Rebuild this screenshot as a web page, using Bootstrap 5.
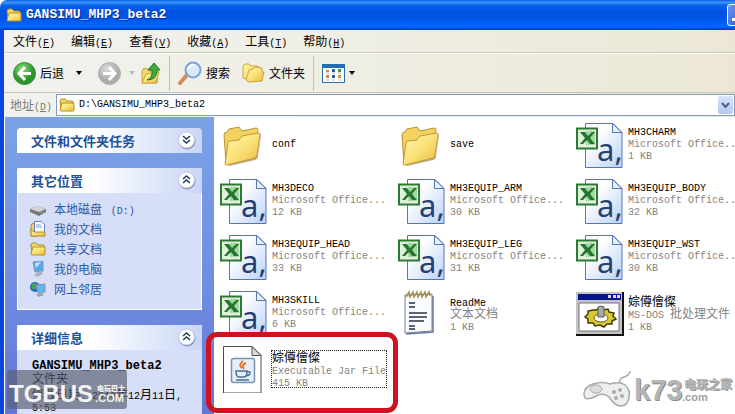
<!DOCTYPE html>
<html lang="zh-CN">
<head>
<meta charset="utf-8">
<meta name="viewport" content="width=device-width, initial-scale=1">
<title>GANSIMU_MHP3_beta2</title>
<link href="https://cdn.jsdelivr.net/npm/bootstrap@5.3.0/dist/css/bootstrap.min.css" rel="stylesheet">
<style>
body{font:12px/12px "Noto Sans CJK SC",sans-serif;color:#000;background:#fff}
button,input{font:inherit;color:inherit;background:none;border:0;padding:0}
a{color:inherit;text-decoration:none}
svg{display:block;flex:none}
.en{font-family:"Liberation Mono",monospace;font-size:10px;line-height:0}
.file>.en,input.en{line-height:12px}
.explorer{min-height:100vh;overflow:hidden}
.titlebar{height:30px;padding-left:6px;gap:4px;color:#fff;background:linear-gradient(#0a5be0,#3c96fc 8%,#0a62ee 18%,#0053e1 35%,#0054e6 60%,#0066fd 85%,#0060f8 92%,#0039b0);border-top-left-radius:7px}
.titlebar h1{font:bold 13px/18px "Liberation Mono",monospace;margin:0;text-shadow:1px 1px #0b2d8c}
.winbtn{width:22px;height:22px;margin-right:-14px;border:1px solid #fff;border-radius:3px;background:linear-gradient(135deg,#6f97f2,#2450d8)}
.frame{border-left:4px solid #0a45e0}
.bars{background:linear-gradient(90deg,#f1f2ee,#efeee4 50%,#ece7d5)}
.menubar{height:23px;padding-left:9px;gap:16px;border-bottom:1px solid #cdcabb}
.toolbar{height:40px;padding-left:9px;border-top:1px solid #fff;border-bottom:1px solid #c9c6b8}
.sep{width:1px;height:35px;background:#c5c2b5}
.addressbar{height:24px;padding-left:6px;color:#7f7c73}
.address{height:22px;border:1px solid #7f9db9;background:#fff;color:#000;padding-left:2px;gap:4px}
.address input{outline:0}
.drop{width:15px;height:18px;margin-right:1px;border-radius:2px;background:linear-gradient(#d9e4fd,#b3c8f5)}
.side{width:210px;padding:11px 12px 0;gap:15px;border-left:1px solid #fff;background:linear-gradient(#7ba2e7,#6f8ce0 60%,#6375d6)}
.panel{background:#d6dff7;color:#215dc6}
.panel-head{height:25px;padding:0 6px 0 14px;background:linear-gradient(90deg,#fff 40%,#c9d5f6);border-radius:4px 4px 0 0}
.panel-head h2{font-size:13px;line-height:16px;font-weight:700;margin:0;color:#215299}
.places{padding:6px 12px 10px;border:1px solid #fff;border-top:0;color:#2c5aa8}
.places a{height:20px;gap:8px}
.details{padding:10px 0 0 15px;color:#000}
.details strong{font:bold 12px/12px "Liberation Mono",monospace}
.files{grid-template-columns:178px 178px 1fr;grid-auto-rows:56px;padding-left:6px;align-content:start}
.file{gap:4px;white-space:nowrap}
.meta{color:#848484}
.picked{outline:1px dotted #222}
.ring{left:-14px;top:-9px;width:192px;height:81px;border:5px solid #cc1420;border-radius:11px;pointer-events:none}
.tgbus{left:7px;bottom:5px;width:120px;height:39px;border-radius:3px;background:rgba(92,96,112,.68);color:#f4f4f4}
.tgbus b{font:bold 24px/24px "Liberation Sans",sans-serif;left:2px;top:12px}
.tgbus .tg-cn{font-size:7px;line-height:8px;font-weight:900;right:2px;top:14px}
.tgbus .tg-com{font:bold 11px/11px "Liberation Sans",sans-serif;right:3px;top:23px}
.k73{right:3px;bottom:3px;width:150px;height:41px;color:#b5b5b5}
.k73 b{font:bold 29px/29px "Liberation Sans",sans-serif;left:52px;top:6px;text-shadow:1px 1px #8c8c8c}
.k73 .k-cn{font-size:12px;line-height:14px;font-weight:900;right:0;top:7px;text-shadow:1px 1px #999}
.k73 .k-com{font:bold 11px/12px "Liberation Sans",sans-serif;left:100px;top:21px;color:#a2a2a2}
</style>
<script src="https://cdn.jsdelivr.net/npm/bootstrap@5.3.0/dist/js/bootstrap.bundle.min.js"></script>
</head>
<body>
<svg width="0" height="0" class="position-absolute" aria-hidden="true">
<defs>
<linearGradient id="gold" x2="1" y2="1"><stop stop-color="#fff6a8"/><stop offset=".5" stop-color="#fbe27b"/><stop offset="1" stop-color="#e9b93c"/></linearGradient>
<linearGradient id="sheet" x2="1" y2="1"><stop offset=".3" stop-color="#fff"/><stop offset="1" stop-color="#b9d1f5"/></linearGradient>
<radialGradient id="green" cx=".4" cy=".3"><stop stop-color="#8ddc78"/><stop offset="1" stop-color="#2c962b"/></radialGradient>
<radialGradient id="grey" cx=".4" cy=".3"><stop stop-color="#dcdcdc"/><stop offset="1" stop-color="#acacac"/></radialGradient>
<symbol id="folder-s" viewBox="0 0 16 14"><path d="M1 3q0-2 2-2h3l2 2h5q1 0 1 1v8H2z" fill="#f6d667" stroke="#b08a28"/><path d="M3 5h12v7q0 1-1 1H2q-1 0-1-1z" fill="url(#gold)" stroke="#b78f2a"/></symbol>
<symbol id="folder" viewBox="0 0 48 48"><path d="M8 43l27-8q3-1 3-4l3-20 0 3-3 21q0 3-3 4L9 45z" fill="#8c7030" opacity=".6"/><path d="M4 14q0-3 3-3l2-3 10-2 3 4 14-3q2 0 2 2l-1 21L6 42z" fill="#f3d35f" stroke="#b8923a"/><path d="M5 43L8 22q0-2 2-2l9-1 3-4 16-3q2 0 2 2l-3 20q0 2-2 3L7 44q-2 0-2-1z" fill="url(#gold)" stroke="#c39a35"/></symbol>
<symbol id="csv" viewBox="0 0 48 48"><path d="M9.500 2.500H37l9 9V46.500H9.500z" fill="url(#sheet)" stroke="#5875b0"/><path d="M36.500 2.500v9H46z" fill="#e6effc" stroke="#5875b0"/><text x="21" y="40" font-family="Noto Sans, sans-serif" font-size="31" fill="#263f72">a,</text><path d="M1 7.500h20v20H1z" fill="#dff0dc" stroke="#2d7a35" stroke-width="2"/><path d="M10 10h9v14h-9z" fill="#a9d6a5"/><path d="M4 11h5l3 4 4-4h3l-5 6 5 6h-5l-3-4-4 4H4l5-6z" fill="#23782d"/></symbol>
<symbol id="notepad" viewBox="0 0 48 48"><path d="M7 6l27-1v37l-27 2z" fill="#f8fbff" stroke="#7181ac"/><path d="M8 45l27-2V7" fill="none" stroke="#6d7892" stroke-width="1.500"/><path d="M8 8l3-5 1 5 3-5 1 5 3-5 1 5 3-5 1 5 3-5 1 5 3-5 1 4" fill="none" stroke="#aa9047" stroke-width="1.500"/><path d="M11 14h6m-6 4h6m-6 6h18m-18 4h18m-18 4h15m-15 5h6m-6 3h6" stroke="#263047" stroke-width="1.300"/></symbol>
<symbol id="batch" viewBox="0 0 48 48"><path d="M0 3h48v44H0z" fill="#111"/><path d="M0 3h46v42H0z" fill="#c3c3c8"/><path d="M2 5h43v6H2z" fill="#05138d"/><path d="M32 6h3v3h-3zm5 0h3v3h-3zm4 0h3v3h-3z" fill="#ddd"/><path d="M3 14h40v28H3z" fill="#fff" stroke="#777"/><path d="M20 21l4-2 3 2 5-1 1 3 5 1-1 3 3 3-4 2v3l-5 0-3 3-4-2-5 1-2-3-5 0 0-4-3-2 3-3 0-3 5-1z" fill="#d8c92f" stroke="#403c0a" stroke-width="1.500"/><ellipse cx="25" cy="29" rx="7" ry="4" fill="#fff" stroke="#615c12"/><path d="M22 18q3-2 6 0v10h-6z" fill="#aaa" stroke="#555"/></symbol>
<symbol id="jar" viewBox="0 0 48 48"><path d="M3.500 1.500H32l9 9V48H3.500z" fill="#fff" stroke="#4d4d4d"/><path d="M32 1.500v9h9z" fill="#ddd" stroke="#4d4d4d"/><rect x="11.500" y="13.500" width="23" height="24" rx="2" fill="#e8eef5" stroke="#7595b8" stroke-width="1.500"/><path d="M23 16q-5 4-1 7m4-5q-5 2-2 6" fill="none" stroke="#e77428" stroke-width="2"/><path d="M16 26h11q0 6-3 6h-5q-3 0-3-6zm11 1q5-1 2 3l-3 1M16 35h13" fill="none" stroke="#466f9d" stroke-width="1.500"/></symbol>
<symbol id="caret" viewBox="0 0 6 4"><path d="M0 0h6L3 4z"/></symbol>
<symbol id="chev" viewBox="0 0 19 19"><circle cx="10" cy="10" r="8.500" fill="#8292bd"/><circle cx="9.500" cy="9" r="8" fill="#fff" stroke="#c1cbe5"/><path d="M6 8l3.500-3L13 8m-7 4l3.500-3L13 12" fill="none" stroke="#1c3b60" stroke-width="1.500"/></symbol>
</defs>
</svg>

<div class="explorer d-flex flex-column position-relative">
  <header class="titlebar d-flex align-items-center">
    <svg width="16" height="14"><use href="#folder-s"/></svg>
    <h1>GANSIMU_MHP3_beta2</h1>
    <button class="winbtn ms-auto" aria-label="最小化"><svg width="20" height="20"><path d="M4 13h8v3H4z" fill="#fff"/></svg></button>
  </header>
  <div class="frame d-flex flex-column flex-grow-1">
    <div class="bars">
      <nav class="menubar d-flex align-items-center">
        <button>文件<span class="en">(<u>F</u>)</span></button>
        <button>编辑<span class="en">(<u>E</u>)</span></button>
        <button>查看<span class="en">(<u>V</u>)</span></button>
        <button>收藏<span class="en">(<u>A</u>)</span></button>
        <button>工具<span class="en">(<u>T</u>)</span></button>
        <button>帮助<span class="en">(<u>H</u>)</span></button>
      </nav>
      <div class="toolbar d-flex align-items-center">
        <button class="d-flex align-items-center me-3">
          <svg class="me-1" width="23" height="23" viewBox="0 0 23 23"><circle cx="11.500" cy="11.500" r="11" fill="url(#green)" stroke="#3c8b37"/><path d="M12 5l-6 6.500 6 6.500M7 11.500h11" fill="none" stroke="#fff" stroke-width="3"/></svg>
          <span class="me-2">后退</span><svg class="ms-1" width="6" height="4"><use href="#caret"/></svg>
        </button>
        <button class="d-flex align-items-center me-1" aria-label="前进">
          <svg class="me-2" width="23" height="23" viewBox="0 0 23 23"><circle cx="11.500" cy="11.500" r="11" fill="url(#grey)" stroke="#b0b0b0"/><path d="M11 5l6 6.500-6 6.500M16 11.500H5" fill="none" stroke="#fff" stroke-width="3"/></svg>
          <svg width="6" height="4" fill="#bbb"><use href="#caret"/></svg>
        </button>
        <button class="me-2" aria-label="向上"><svg width="22" height="23" viewBox="0 0 22 23"><path d="M3 21V9l2-3 4 1 1 2h9l-1 12z" fill="#f4d86c" stroke="#c9a43b"/><path d="M3 21l4-9 13-2-3 11z" fill="url(#gold)" stroke="#c9a43b"/><path d="M8 18q6-2 5-10H9l6-7 6 7h-3q0 10-10 10z" fill="#3cac3c" stroke="#23752a"/></svg></button>
        <span class="sep me-2"></span>
        <button class="d-flex align-items-center me-2">
          <svg class="me-1" width="24" height="24" viewBox="0 0 24 24"><path d="M9 14l-7 8" stroke="#d28a61" stroke-width="4" stroke-linecap="round"/><circle cx="15" cy="9" r="7.500" fill="#d5ecfd" stroke="#7ba4d3" stroke-width="2"/><path d="M10 8q2-4 6-4" stroke="#fff" stroke-width="2" fill="none"/></svg>
          搜索
        </button>
        <button class="d-flex align-items-center ms-1 me-2">
          <svg class="me-1" width="23" height="20" viewBox="0 0 23 20"><path d="M1 15V3l2-2h4l2 2h7v4L8 17z" fill="url(#gold)" stroke="#c9a43b"/><path d="M4 17l3-10 4-1 2-2 7 1v4l2 0-2 9-14 1z" fill="url(#gold)" stroke="#c9a43b"/></svg>
          文件夹
        </button>
        <span class="sep me-2"></span>
        <button class="d-flex align-items-center" aria-label="查看方式">
          <svg class="me-1" width="23" height="19" viewBox="0 0 23 19"><path d="M.5.500h22v18H.5z" fill="#fff" stroke="#286cae"/><path d="M0 0h23v4H0z" fill="#246db3"/><path d="M4 6h3v2H4zm0 5h3v3H4z" fill="#dd8060"/><path d="M10 5h3v3h-3zm0 6h3v3h-3z" fill="#285f9f"/><path d="M16 5h3v3h-3z" fill="#39944a"/><path d="M16 11h3v3h-3z" fill="#c1a033"/><path d="M4 9h3m3 0h3m3 0h3M4 16h3m3 0h3m3 0h3" stroke="#bbb"/></svg>
          <svg width="6" height="4"><use href="#caret"/></svg>
        </button>
      </div>
      <div class="addressbar d-flex align-items-center">
        <label for="addr" class="me-1 text-nowrap">地址<span class="en">(<u>D</u>)</span></label>
        <div class="address d-flex align-items-center flex-grow-1">
          <svg width="16" height="14"><use href="#folder-s"/></svg>
          <input id="addr" class="en flex-grow-1" type="text" value="D:\GANSIMU_MHP3_beta2">
          <button class="drop d-flex align-items-center justify-content-center" aria-label="地址列表"><svg width="9" height="7"><path d="M1 1l3.500 4L8 1" fill="none" stroke="#4d6185" stroke-width="2"/></svg></button>
        </div>
      </div>
    </div>

    <div class="d-flex flex-grow-1">
      <aside class="side d-flex flex-column flex-shrink-0">
        <section>
          <div class="panel-head d-flex align-items-center justify-content-between"><h2>文件和文件夹任务</h2><button aria-label="展开"><svg width="19" height="19" viewBox="0 0 19 19"><circle cx="10" cy="10" r="8.500" fill="#8292bd"/><circle cx="9.500" cy="9" r="8" fill="#fff" stroke="#c1cbe5"/><path d="M6 5l3.500 3L13 5m-7 4l3.500 3L13 9" fill="none" stroke="#1c3b60" stroke-width="1.500"/></svg></button></div>
        </section>
        <section class="panel">
          <div class="panel-head d-flex align-items-center justify-content-between"><h2>其它位置</h2><button aria-label="收起"><svg width="19" height="19"><use href="#chev"/></svg></button></div>
          <nav class="places">
            <a href="#" class="d-flex align-items-center"><svg width="16" height="16"><path d="M0 8l7-3 9 3v3l-7 4-9-4z" fill="#777"/><path d="M0 8l7-3 9 3-7 3z" fill="#d5d5d5"/><path d="M10 12l4-2" stroke="#6b6"/></svg><span>本地磁盘 <span class="en">&nbsp;(D:)</span></span></a>
            <a href="#" class="d-flex align-items-center"><svg width="16" height="16"><path d="M1 4l2-2h4v13H1z" fill="#efd067" stroke="#ae8a31"/><path d="M4.500.500h7l3 3v9h-10z" fill="#fff" stroke="#6281b8"/><path d="M6 4h5M6 6h6" stroke="#7b9bd1"/><path d="M1 15V8l3 3h11v4z" fill="url(#gold)" stroke="#ae8a31"/></svg>我的文档</a>
            <a href="#" class="d-flex align-items-center"><svg width="16" height="14"><use href="#folder-s"/></svg>共享文档</a>
            <a href="#" class="d-flex align-items-center"><svg width="16" height="16"><path d="M3 1l10-1v10l-8 1z" fill="#54aaf0" stroke="#8392b4"/><path d="M5 2l6-1-5 6z" fill="#c3e7ff"/><path d="M8 11l3-1 2 3-6 3-3-2z" fill="#aab1bf"/></svg>我的电脑</a>
            <a href="#" class="d-flex align-items-center"><svg width="16" height="16"><circle cx="5" cy="6" r="5" fill="#2b68bf"/><path d="M2 3l4-1 1 4-3 3-3-3z" fill="#42a94a"/><path d="M6 4l9-1v8l-7 1z" fill="#61b5f2" stroke="#8392b4"/><path d="M9 12l3-1 2 3-5 2-3-2z" fill="#9ca5b5"/></svg>网上邻居</a>
          </nav>
        </section>
        <section class="panel flex-grow-1">
          <div class="panel-head d-flex align-items-center justify-content-between"><h2>详细信息</h2><button aria-label="收起"><svg width="19" height="19"><use href="#chev"/></svg></button></div>
          <div class="details text-nowrap">
            <strong class="d-block">GANSIMU_MHP3_beta2</strong>
            <div class="mb-1">文件夹</div>
            <div>修改日期<span class="en">: 2010</span>年<span class="en">12</span>月<span class="en">11</span>日<span class="en">,<br>5:53</span></div>
          </div>
        </section>
      </aside>

      <main class="files d-grid flex-grow-1">
        <a href="#" class="file d-flex align-items-center"><svg width="48" height="48"><use href="#folder"/></svg><span class="en">conf</span></a>
        <a href="#" class="file d-flex align-items-center"><svg width="48" height="48"><use href="#folder"/></svg><span class="en">save</span></a>
        <a href="#" class="file d-flex align-items-center"><svg width="48" height="48"><use href="#csv"/></svg><span class="en">MH3CHARM<br><span class="meta">Microsoft Office...<br>1 KB</span></span></a>
        <a href="#" class="file d-flex align-items-center"><svg width="48" height="48"><use href="#csv"/></svg><span class="en">MH3DECO<br><span class="meta">Microsoft Office...<br>12 KB</span></span></a>
        <a href="#" class="file d-flex align-items-center"><svg width="48" height="48"><use href="#csv"/></svg><span class="en">MH3EQUIP_ARM<br><span class="meta">Microsoft Office...<br>30 KB</span></span></a>
        <a href="#" class="file d-flex align-items-center"><svg width="48" height="48"><use href="#csv"/></svg><span class="en">MH3EQUIP_BODY<br><span class="meta">Microsoft Office...<br>32 KB</span></span></a>
        <a href="#" class="file d-flex align-items-center"><svg width="48" height="48"><use href="#csv"/></svg><span class="en">MH3EQUIP_HEAD<br><span class="meta">Microsoft Office...<br>33 KB</span></span></a>
        <a href="#" class="file d-flex align-items-center"><svg width="48" height="48"><use href="#csv"/></svg><span class="en">MH3EQUIP_LEG<br><span class="meta">Microsoft Office...<br>31 KB</span></span></a>
        <a href="#" class="file d-flex align-items-center"><svg width="48" height="48"><use href="#csv"/></svg><span class="en">MH3EQUIP_WST<br><span class="meta">Microsoft Office...<br>30 KB</span></span></a>
        <a href="#" class="file d-flex align-items-center"><svg width="48" height="48"><use href="#csv"/></svg><span class="en">MH3SKILL<br><span class="meta">Microsoft Office...<br>6 KB</span></span></a>
        <a href="#" class="file d-flex align-items-center"><svg width="48" height="48"><use href="#notepad"/></svg><span><span class="en">ReadMe</span><br><span class="meta">文本文档<br><span class="en">1 KB</span></span></span></a>
        <a href="#" class="file d-flex align-items-center"><svg width="48" height="48"><use href="#batch"/></svg><span>婃僔儈儏<br><span class="meta"><span class="en">MS-DOS </span>批处理文件<br><span class="en">1 KB</span></span></span></a>
        <a href="#" class="file d-flex align-items-center position-relative"><svg width="48" height="48"><use href="#jar"/></svg><span class="picked">婃僔儈儏<br><span class="meta en">Executable Jar File<br>415 KB</span></span><span class="ring position-absolute"></span></a>
      </main>
    </div>
  </div>

  <div class="tgbus position-absolute"><b class="position-absolute">TGBUS</b><span class="tg-cn position-absolute">电玩巴士</span><span class="tg-com position-absolute">.COM</span></div>
  <div class="k73 position-absolute">
    <svg width="52" height="41" viewBox="0 0 52 41"><path d="M38 14q-2-5 4-7t6-6" fill="none" stroke="#a8a8a8" stroke-width="1.500"/><path d="M2 24q0-7 9-10 10-3 17 0 10-3 15 1 6 5 4 13-2 8-8 8-6 0-12-9-5-4-11-2Q2 33 2 24z" fill="#eee" stroke="#aaa" stroke-width="1.500"/><ellipse cx="14" cy="19" rx="6" ry="4" fill="#ddd" stroke="#aaa"/><g fill="#aaa"><circle cx="32" cy="22" r="2"/><circle cx="38" cy="20" r="2"/><circle cx="34" cy="28" r="2"/><circle cx="40" cy="26" r="2"/></g></svg>
    <b class="position-absolute">k73</b><span class="k-cn position-absolute">电玩之家</span><span class="k-com position-absolute">.com</span>
  </div>
</div>
</body>
</html>
